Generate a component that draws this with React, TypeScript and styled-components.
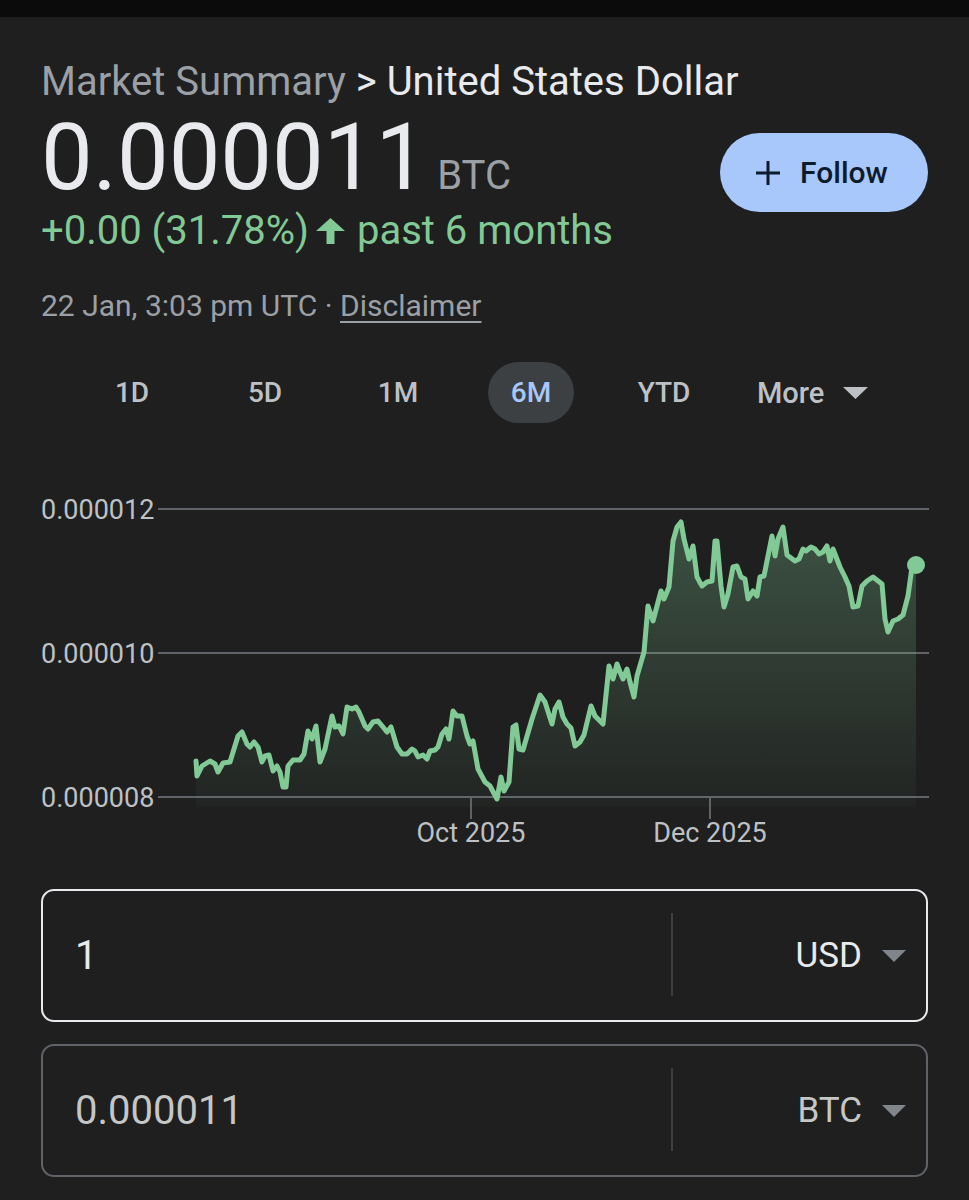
import React from 'react';
import styled, { createGlobalStyle } from 'styled-components';

const GlobalStyle = createGlobalStyle`
  html, body {
    margin: 0;
    padding: 0;
    background: #1f1f1f;
  }
  body {
    font-family: Roboto, "Noto Sans", Arial, sans-serif;
    color: #e8eaed;
  }
`;

const Page = styled.div`
  width: 969px;
  min-height: 1200px;
  background: #1f1f1f;
  box-sizing: border-box;

  &, & * {
    box-sizing: border-box;
  }
`;

const StatusBar = styled.div`
  height: 17px;
  background: #0b0b0b;
`;

const Content = styled.main`
  display: flex;
  flex-direction: column;
  padding: 0 41px;
`;

const Breadcrumb = styled.div`
  margin-top: 41px;
  font-size: 40px;
  line-height: 48px;
  white-space: nowrap;
`;

const Crumb = styled.span<{ current?: boolean }>`
  color: ${({ current }) => (current ? '#e8eaed' : '#9aa0a6')};
`;

const PriceRow = styled.div`
  display: flex;
  justify-content: space-between;
  align-items: flex-start;
  height: 90px;
  margin-top: 7px;
`;

const Price = styled.div`
  display: flex;
  align-items: baseline;
`;

const PriceValue = styled.span`
  font-size: 92px;
  line-height: 90px;
  color: #e8eaed;
`;

const PriceUnit = styled.span`
  margin-left: 10px;
  font-size: 40px;
  color: #9aa0a6;
`;

const FollowButton = styled.button`
  display: flex;
  align-items: center;
  gap: 20px;
  margin-top: 20px;
  height: 79px;
  width: 208px;
  padding: 0 0 0 36px;
  border: none;
  border-radius: 40px;
  background: #a8c7fa;
  color: #0d1b2e;
  font-family: Roboto, Arial, sans-serif;
  font-size: 30px;
  font-weight: 500;
`;

const Change = styled.div`
  display: flex;
  align-items: center;
  margin-top: 4px;
  font-size: 40px;
  line-height: 48px;
  color: #81c995;
  white-space: nowrap;
`;

const ArrowUp = styled.svg`
  margin: 0 12px 0 7px;
  flex: none;
`;

const Timestamp = styled.div`
  margin-top: 33px;
  font-size: 30px;
  line-height: 36px;
  color: #9aa0a6;
`;

const Disclaimer = styled.a`
  color: #9aa0a6;
  text-decoration: underline;
  text-underline-offset: 5px;
  text-decoration-thickness: 2px;
`;

const RangeTabs = styled.nav`
  display: flex;
  align-items: center;
  gap: 47px;
  margin-top: 38px;
  padding-left: 48px;
`;

const Tab = styled.div<{ active?: boolean }>`
  display: flex;
  align-items: center;
  justify-content: center;
  width: 86px;
  height: 61px;
  border-radius: 31px;
  background: ${({ active }) => (active ? '#3c4043' : 'transparent')};
  color: ${({ active }) => (active ? '#a8c7fa' : '#bdc1c6')};
  font-size: 28px;
  font-weight: 500;
`;

const MoreTab = styled.div`
  display: flex;
  align-items: center;
  gap: 19px;
  height: 61px;
  padding-left: 3px;
  color: #bdc1c6;
  font-size: 29px;
  font-weight: 500;
`;

const Chart = styled.svg`
  display: block;
  margin-top: 36px;
`;

const Converter = styled.div`
  display: flex;
  flex-direction: column;
  gap: 22px;
  margin-top: 36px;
`;

const ConvertBox = styled.div<{ focused?: boolean }>`
  display: flex;
  align-items: center;
  height: 133px;
  border: 2px solid ${({ focused }) => (focused ? '#e8eaed' : '#5f6368')};
  border-radius: 13px;
`;

const Amount = styled.div<{ dim?: boolean }>`
  flex: 1;
  padding-left: 32px;
  font-size: 40px;
  color: ${({ dim }) => (dim ? '#c4c7c5' : '#e8eaed')};
`;

const Divider = styled.div`
  width: 2px;
  align-self: stretch;
  margin: 22px 0 24px;
  background: #3c4043;
`;

const UnitSelect = styled.div<{ dim?: boolean }>`
  display: flex;
  align-items: center;
  justify-content: flex-end;
  gap: 20px;
  width: 253px;
  padding-right: 20px;
  font-size: 35px;
  color: ${({ dim }) => (dim ? '#c4c7c5' : '#e8eaed')};
`;

const Caret = ({ color, w = 24, h = 12 }: { color: string; w?: number; h?: number }) => (
  <svg width={w} height={h} viewBox="0 0 24 12" preserveAspectRatio="none">
    <path d="M0 0 H24 L12 12 Z" fill={color} />
  </svg>
);

// page coordinates of the 6M price line
const points: [number, number][] = [
  [196, 762], [197, 777], [202, 767], [210, 762], [215, 765], [218, 773], [223, 764], [230, 763],
  [238, 737], [242, 733], [247, 745], [250, 748], [254, 743], [258, 748], [262, 763], [265, 757],
  [269, 756], [273, 772], [277, 767], [280, 773], [283, 788], [286, 788], [288, 767], [293, 761],
  [300, 761], [304, 755], [308, 732], [312, 740], [316, 727], [320, 763], [325, 750], [332, 717],
  [335, 728], [339, 727], [343, 735], [347, 708], [352, 710], [356, 708], [359, 713], [365, 727],
  [368, 730], [373, 723], [378, 722], [383, 728], [387, 733], [391, 728], [397, 748], [402, 755],
  [407, 755], [412, 750], [415, 752], [418, 758], [423, 756], [427, 760], [430, 752], [435, 751],
  [438, 748], [442, 735], [446, 730], [449, 740], [453, 712], [457, 717], [462, 717], [467, 737],
  [470, 745], [473, 742], [478, 770], [485, 783], [490, 787], [497, 800], [501, 778], [504, 792],
  [509, 783], [513, 728], [516, 726], [519, 750], [523, 751], [532, 720], [540, 696], [545, 703],
  [552, 725], [555, 710], [559, 703], [563, 718], [567, 725], [571, 729], [575, 747], [580, 743],
  [584, 736], [591, 707], [595, 717], [603, 725], [609, 667], [613, 680], [617, 665], [620, 673],
  [623, 680], [627, 670], [630, 683], [634, 698], [637, 677], [644, 653], [648, 607], [653, 622],
  [661, 592], [664, 600], [669, 588], [673, 542], [677, 528], [681, 523], [684, 540], [689, 560],
  [693, 547], [697, 578], [702, 587], [707, 583], [712, 582], [715, 542], [717, 542], [721, 587],
  [724, 608], [728, 595], [733, 568], [737, 567], [741, 578], [745, 580], [748, 600], [753, 592],
  [757, 597], [760, 578], [764, 577], [772, 537], [775, 557], [778, 540], [783, 528], [787, 556],
  [795, 562], [799, 560], [803, 550], [806, 552], [811, 548], [815, 550], [819, 555], [823, 553],
  [827, 547], [830, 562], [833, 550], [840, 568], [845, 578], [849, 587], [853, 608], [858, 607],
  [862, 587], [867, 582], [873, 578], [882, 585], [885, 620], [888, 633], [893, 622], [898, 620],
  [903, 616], [908, 597], [912, 568], [916, 566],
];

const linePath = points.map(([x, y], i) => `${i ? 'L' : 'M'}${x} ${y}`).join(' ');
const last = points[points.length - 1];
const areaPath = `${linePath} L${last[0]} 808 L${points[0][0]} 808 Z`;

const gridRows = [
  { y: 510, label: '0.000012' },
  { y: 654, label: '0.000010' },
  { y: 798, label: '0.000008' },
];

const months = [
  { x: 471, label: 'Oct 2025' },
  { x: 710, label: 'Dec 2025' },
];

const PriceChart = () => (
  <Chart width={888} height={394} viewBox="41 460 888 394">
    <defs>
      <linearGradient id="area" x1="0" y1="0" x2="0" y2="1">
        <stop offset="0" stopColor="#81c995" stopOpacity="0.3" />
        <stop offset="1" stopColor="#81c995" stopOpacity="0.03" />
      </linearGradient>
    </defs>
    {gridRows.map((r) => (
      <g key={r.label}>
        <line x1={158} x2={929} y1={r.y} y2={r.y} stroke="#5f6368" strokeWidth={2} />
        <text x={41} y={r.y + 10} fill="#bdc1c6" fontSize={27} fontFamily="Roboto, Arial, sans-serif">
          {r.label}
        </text>
      </g>
    ))}
    <path d={areaPath} fill="url(#area)" />
    {months.map((m) => (
      <g key={m.label}>
        <line x1={m.x} x2={m.x} y1={798} y2={820} stroke="#5f6368" strokeWidth={2} />
        <text x={m.x} y={843} textAnchor="middle" fill="#bdc1c6" fontSize={27} fontFamily="Roboto, Arial, sans-serif">
          {m.label}
        </text>
      </g>
    ))}
    <path d={linePath} fill="none" stroke="#81c995" strokeWidth={5} strokeLinejoin="round" strokeLinecap="round" />
    <circle cx={last[0]} cy={last[1]} r={9} fill="#81c995" />
  </Chart>
);

const ranges = ['1D', '5D', '1M', '6M', 'YTD'];

export default function App() {
  return (
    <Page>
      <GlobalStyle />
      <StatusBar />
      <Content>
        <Breadcrumb>
          <Crumb>Market Summary</Crumb> <Crumb current>&gt; United States Dollar</Crumb>
        </Breadcrumb>
        <PriceRow>
          <Price>
            <PriceValue>0.000011</PriceValue>
            <PriceUnit>BTC</PriceUnit>
          </Price>
          <FollowButton>
            <svg width="24" height="24" viewBox="0 0 24 24">
              <path d="M12 0 V24 M0 12 H24" stroke="#0d1b2e" strokeWidth="3" />
            </svg>
            Follow
          </FollowButton>
        </PriceRow>
        <Change>
          +0.00 (31.78%)
          <ArrowUp width="29" height="26" viewBox="0 0 29 26">
            <path d="M14.5 0 L29 13 H18.5 V26 H10.5 V13 H0 Z" fill="#81c995" />
          </ArrowUp>
          past 6 months
        </Change>
        <Timestamp>
          22 Jan, 3:03 pm UTC · <Disclaimer>Disclaimer</Disclaimer>
        </Timestamp>
        <RangeTabs>
          {ranges.map((r) => (
            <Tab key={r} active={r === '6M'}>{r}</Tab>
          ))}
          <MoreTab>
            More
            <Caret color="#bdc1c6" w={25} h={12} />
          </MoreTab>
        </RangeTabs>
        <PriceChart />
        <Converter>
          <ConvertBox focused>
            <Amount>1</Amount>
            <Divider />
            <UnitSelect>
              USD
              <Caret color="#80868b" />
            </UnitSelect>
          </ConvertBox>
          <ConvertBox>
            <Amount dim>0.000011</Amount>
            <Divider />
            <UnitSelect dim>
              BTC
              <Caret color="#80868b" />
            </UnitSelect>
          </ConvertBox>
        </Converter>
      </Content>
    </Page>
  );
}
